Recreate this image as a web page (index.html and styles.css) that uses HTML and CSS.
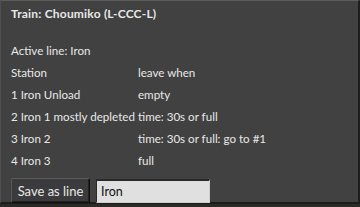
FILE: index.html
```html
<!DOCTYPE html>
<html lang="en">
<head>
  <meta charset="UTF-8" />
  <title>Train</title>
  <link rel="stylesheet" href="styles.css">
</head>
<body>
<div class="frame">
  <div class="title">Train: Choumiko (L-CCC-L)</div>
  <div class="active">Active line: Iron</div>
  <div class="records">
    <div>Station</div><div>leave when</div>
    <div>1 Iron Unload</div><div>empty</div>
    <div>2 Iron 1 mostly depleted</div><div>time: 30s or full</div>
    <div>3 Iron 2</div><div>time: 30s or full: go to #1</div>
    <div>4 Iron 3</div><div>full</div>
  </div>
  <div class="actions">
    <button class="btn">Save as line</button>
    <input class="field" value="Iron">
  </div>
</div>
</body>
</html>
```

FILE: styles.css
```css
* { box-sizing: border-box; }
html, body { margin:0; padding:0; }
body { width:360px; height:207px; background:#2b2a27; font-family:"Lato", sans-serif; overflow:hidden; }
.frame {
  width:360px; height:204px; background:#414141;
  border-top:1px solid #5c5c5c; border-right:2px solid #1e1e1e; border-bottom:2px solid #1c1c1c;
  border-left:1px solid #4e4e4e;
  padding:5px 0 0 10px; color:#e8e8e8; font-size:11.6px;
}
.title { font-weight:bold; font-size:12px; height:16px; line-height:16px; letter-spacing:0.2px; }
.active { margin-top:21px; height:16px; line-height:16px; }
.records { display:grid; grid-template-columns:127px 1fr; row-gap:6px; margin-top:6px; }
.records div { height:16px; line-height:16px; white-space:nowrap; }
.actions { display:flex; gap:6px; margin-top:9px; align-items:center; }
.btn {
  width:79px; height:25px; padding:0; font-family:"Lato", sans-serif; font-size:13px;
  color:#e8e8e8; background:#3b3b3d;
  border:1px solid #111; border-top-color:#5a5a5a; border-left-color:#555;
  box-shadow:inset -1px -1px 0 #222;
}
.field {
  width:114px; height:24px; padding:0 0 0 4px; font-family:"Lato", sans-serif; font-size:12.5px;
  color:#111; background:#e0e0e0;
  border:1px solid #cfcfcf; border-top:2px solid #2a2a2a; border-left-color:#2a2a2a;
}
```
